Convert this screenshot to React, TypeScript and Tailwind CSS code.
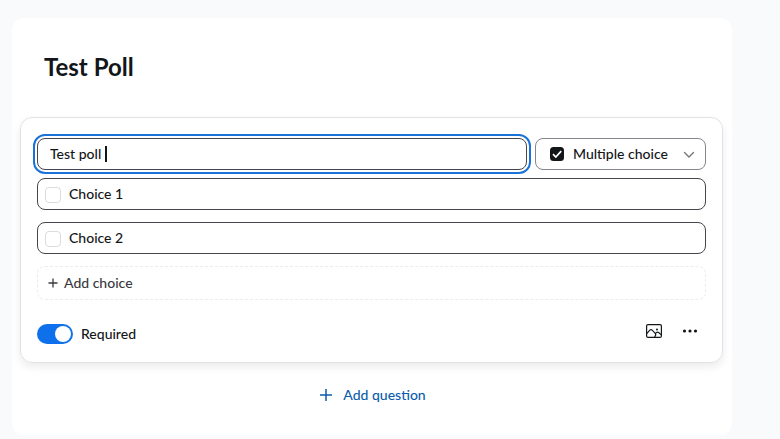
import { useState } from "react";

function Choice({ id, name }: { id: string; name: string }) {
  const [value, setValue] = useState(name);

  return (
    <div className="flex h-8 items-center gap-2 rounded-lg border border-[#45454b] px-[7px]">
      <input
        type="checkbox"
        disabled
        aria-label={`Select ${name}`}
        className="mt-px size-4 shrink-0 appearance-none rounded border border-[#dcdce0] bg-white"
      />
      <input
        id={id}
        type="text"
        aria-label={name}
        value={value}
        onChange={(e) => setValue(e.target.value)}
        className="min-w-0 flex-1 bg-transparent text-sm outline-none"
      />
    </div>
  );
}

export default function App() {
  const [question, setQuestion] = useState("Test poll ");
  const [required, setRequired] = useState(true);

  return (
    <div className="min-h-screen bg-[#f8fafc] pt-[18px] pr-12 pb-1 pl-3 font-['Lato',sans-serif] text-sm font-medium text-[#131619]">
      <main className="rounded-xl bg-white px-2 pb-[30px]">
        <h1 className="px-6 pt-[33px] pb-[34px] text-2xl font-bold">Test Poll</h1>

        {/* Question card */}
        <section className="mr-px rounded-xl border border-[#e2e2e5] px-4 pt-5 pb-[18px] shadow-[0_4px_8px_rgba(0,0,0,0.08)]">
          <div className="flex gap-2">
            <div className="flex h-8 min-w-0 flex-1 items-center rounded-lg border border-[#45454b] px-3 outline-2 outline-offset-2 outline-[#1a73d9]">
              <input
                type="text"
                aria-label="Question"
                value={question}
                onChange={(e) => setQuestion(e.target.value)}
                className="min-w-0 bg-transparent caret-transparent outline-none [field-sizing:content]"
              />
              <span className="h-4 w-[2px] bg-[#131619]" />
            </div>

            {/* Question type */}
            <div className="relative w-[171px] shrink-0">
              <svg viewBox="0 0 14 14" className="pointer-events-none absolute top-[9px] left-[15px] size-[14px]">
                <rect width="14" height="14" rx="3.5" fill="#131619" />
                <path d="M3 7.2l2.8 2.8 5.4-5.8" fill="none" stroke="#fff" strokeWidth="1.7" />
              </svg>
              <select
                aria-label="Question type"
                className="h-8 w-full appearance-none rounded-lg border border-[#85858c] bg-transparent pl-[37px]"
              >
                <option>Multiple choice</option>
                <option>Single choice</option>
              </select>
              <svg viewBox="0 0 12 12" className="pointer-events-none absolute top-[11px] right-[11px] size-3">
                <path d="M1.5 3.5L6 8l4.5-4.5" fill="none" stroke="#77777e" strokeWidth="1.4" strokeLinecap="round" />
              </svg>
            </div>
          </div>

          <div className="mt-2 flex flex-col gap-3">
            <Choice id="choice-1" name="Choice 1" />
            <Choice id="choice-2" name="Choice 2" />
            <button
              type="button"
              className="flex h-[34px] items-center gap-[6px] rounded-lg border border-dashed border-[#ececef] px-[10px] text-[#3a3a40]"
            >
              <svg viewBox="0 0 10 10" className="size-[10px]">
                <path d="M5 0.5v9M0.5 5h9" stroke="currentColor" strokeWidth="1.3" />
              </svg>
              Add choice
            </button>
          </div>

          <div className="mt-5 flex items-start justify-between">
            <label className="mt-1 flex items-center gap-2">
              <input
                type="checkbox"
                role="switch"
                checked={required}
                onChange={(e) => setRequired(e.target.checked)}
                className="flex h-5 w-9 appearance-none items-center rounded-full bg-[#9a9aa2] px-[2px] before:size-4 before:rounded-full before:bg-white checked:justify-end checked:bg-[#0e71eb]"
              />
              Required
            </label>

            <div className="flex h-[22px] items-center gap-5 pr-2">
              <button type="button" aria-label="Add image">
                <svg viewBox="0 0 16 14" className="h-[14px] w-4" fill="none" stroke="#131619" strokeWidth="1.2">
                  <rect x="0.6" y="0.6" width="14.8" height="12.8" rx="1.5" />
                  <path
                    d="M0.8 9.6l3-3.4q1.2-1.1 2.4 0l3 3.2q1.4 1.7-0.7 3.6M9.3 9.6l1.2-1.1q1.1-0.8 2.2 0l2.5 2.4"
                    strokeWidth="1.1"
                  />
                  <circle cx="11" cy="5.5" r="1" fill="#131619" stroke="none" />
                </svg>
              </button>
              <button type="button" aria-label="More options">
                <svg viewBox="0 0 16 4" className="h-1 w-4" fill="#131619">
                  <circle cx="2.5" cy="2" r="1.6" />
                  <circle cx="8" cy="2" r="1.6" />
                  <circle cx="13.5" cy="2" r="1.6" />
                </svg>
              </button>
            </div>
          </div>
        </section>

        <div className="mt-[22px] flex justify-center pl-[2px]">
          <button type="button" className="flex items-center gap-[11px] text-[#0b5cab]">
            <svg viewBox="0 0 12 12" className="size-3">
              <path d="M6 0v12M0 6h12" stroke="currentColor" strokeWidth="1.5" />
            </svg>
            Add question
          </button>
        </div>
      </main>
    </div>
  );
}
